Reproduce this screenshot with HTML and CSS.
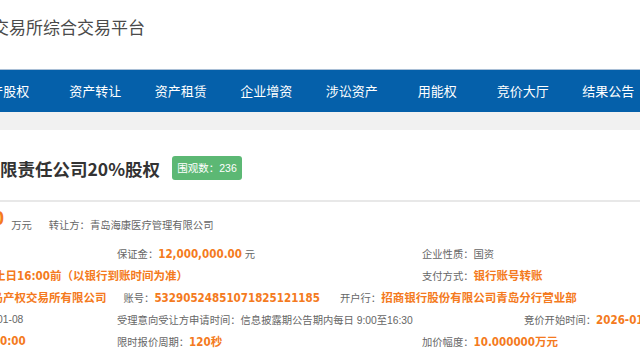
FILE: index.html
```html
<!DOCTYPE html>
<html lang="zh-CN">
  <head>
    <title>交易所综合交易平台</title>
    <meta charset="UTF-8" />
    <meta name="viewport" content="width=device-width, initial-scale=1.0" />
    <link rel="stylesheet" href="styles.css">
  </head>

  <body>
    <header class="top">
      <h1 class="site-name">交易所综合交易平台</h1>
    </header>

    <nav class="main-nav">
      <ul>
        <li>产股权</li>
        <li>资产转让</li>
        <li>资产租赁</li>
        <li>企业增资</li>
        <li>涉讼资产</li>
        <li>用能权</li>
        <li>竞价大厅</li>
        <li>结果公告</li>
      </ul>
    </nav>

    <main class="page">
      <section class="project">
        <div class="project-head">
          <h2 class="project-title">限责任公司20%股权</h2>
          <span class="badge">围观数：236</span>
        </div>

        <div class="info">
          <div class="row row-price">
            <span class="price">0</span>
            <span class="unit">万元</span>
            <span class="seller">转让方：青岛海康医疗管理有限公司</span>
          </div>

          <div class="row">
            <span class="c1"></span>
            <span class="c2">保证金：<b class="val">12,000,000.00</b> 元</span>
            <span class="c3">企业性质：国资</span>
          </div>

          <div class="row">
            <span class="c12"><b class="val cut-1">止日16:00前（以银行到账时间为准）</b></span>
            <span class="c3">支付方式：<b class="val">银行账号转账</b></span>
          </div>

          <div class="row row-bank">
            <b class="val cut-2">青岛产权交易所有限公司</b>
            <span class="account">账号：<b class="val">53290524851071825121185</b></span>
            <span class="bank">开户行：<b class="val">招商银行股份有限公司青岛分行营业部</b></span>
          </div>

          <div class="row">
            <span class="c1"><span class="cut-3">01-08</span></span>
            <span class="c2 wide">受理意向受让方申请时间：信息披露期公告期内每日 9:00至16:30</span>
            <span class="c3">竞价开始时间：<b class="val">2026-01-15 09:00:00</b></span>
          </div>

          <div class="row">
            <span class="c1"><b class="val">0:00</b></span>
            <span class="c2">限时报价周期：<b class="val">120秒</b></span>
            <span class="c3">加价幅度：<b class="val">10.000000万元</b></span>
          </div>
        </div>
      </section>
    </main>
  </body>
</html>
```

FILE: styles.css
```css
body {
  font-family: "Liberation Sans", "Noto Sans CJK SC", sans-serif;
  margin: 0;
  width: 640px;
  height: 360px;
  overflow: hidden;
  background-color: #f1f1f1;
}

.top {
  height: 69px;
  background-color: #fff;
  border-bottom: 1px solid #a9bfd6;
  display: flex;
  align-items: center;
}

.site-name {
  margin: -17px 0 0 -8px;
  font-family: "Noto Sans CJK SC", sans-serif;
  font-size: 17px;
  font-weight: normal;
  color: #4a4a4a;
  white-space: nowrap;
}

.main-nav {
  height: 42px;
  background-color: #0560aa;
}

.main-nav ul {
  display: flex;
  list-style: none;
  margin: 0 0 0 -33px;
  padding: 0;
}

.main-nav li {
  flex: 0 0 85.5px;
  text-align: center;
  line-height: 42px;
  font-family: "Noto Sans CJK SC", sans-serif;
  font-size: 13px;
  color: #fff;
  white-space: nowrap;
}

.page {
  padding-top: 18px;
}

.project {
  background-color: #fff;
  height: 230px;
}

.project-head {
  height: 72px;
  box-sizing: border-box;
  padding-top: 6px;
  display: flex;
  align-items: center;
  gap: 12px;
  border-bottom: 2px solid #e8e8e8;
}

.project-title {
  margin: 0;
  font-family: "Noto Sans CJK SC", sans-serif;
  font-size: 17.5px;
  font-weight: bold;
  color: #333;
  white-space: nowrap;
}

.badge {
  width: 70px;
  height: 24px;
  box-sizing: border-box;
  background-color: #5cb874;
  border-radius: 3px;
  color: #fff;
  font-size: 10.5px;
  line-height: 24px;
  text-align: center;
}

.info {
  font-size: 10.3px;
  color: #666;
}

.row {
  display: flex;
  align-items: center;
  height: 22px;
  white-space: nowrap;
}

.val {
  font-family: "DejaVu Sans Condensed", "DejaVu Sans", "Noto Sans CJK SC", sans-serif;
  font-stretch: condensed;
  font-size: 11.5px;
  font-weight: bold;
  color: #f47a20;
}

.row-price {
  height: 24px;
  margin: 10px 0 6px;
}

.price {
  align-self: flex-start;
  margin: -4px 0 0 -7px;
  font-size: 20px;
  line-height: 20px;
  font-weight: bold;
  color: #f47a20;
}

.unit {
  margin-left: 7px;
}

.seller {
  margin-left: 17px;
}

.c1 {
  flex: 0 0 117px;
}

.c2 {
  flex: 0 0 305px;
}

.c2.wide {
  flex-basis: 407px;
}

.c12 {
  flex: 0 0 422px;
}

.cut-1 {
  margin-left: -6px;
}

.cut-2 {
  margin-left: -20px;
}

.cut-3 {
  margin-left: -3px;
}

.account {
  margin-left: 17px;
}

.bank {
  margin-left: 20px;
}
```
